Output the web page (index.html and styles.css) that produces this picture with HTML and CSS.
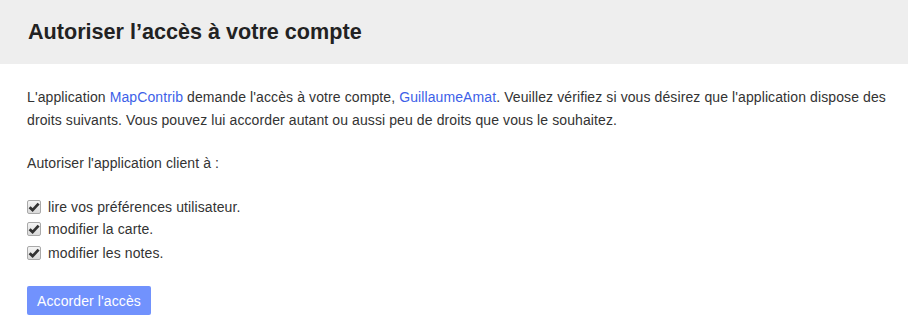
FILE: index.html
```html
<!DOCTYPE html>
<html lang="fr">
<head>
<meta charset="utf-8">
<link rel="stylesheet" href="styles.css">
</head>
<body>
<header class="header">
  <h1 class="title">Autoriser l’accès à votre compte</h1>
</header>
<main class="content">
  <p class="intro">L'application <a href="#" class="link">MapContrib</a> demande l'accès à votre compte, <a href="#" class="link">GuillaumeAmat</a>. Veuillez vérifiez si vous désirez que l'application dispose des droits suivants. Vous pouvez lui accorder autant ou aussi peu de droits que vous le souhaitez.</p>
  <p class="label">Autoriser l'application client à :</p>
  <ul class="perms">
    <li class="perm"><span class="check"><svg viewBox="0 0 12 12" width="12" height="12"><path d="M1.6 6.2 L4.6 9.1 L10.6 2.6" fill="none" stroke="#333" stroke-width="2.8" stroke-linejoin="miter"/></svg></span>lire vos préférences utilisateur.</li>
    <li class="perm"><span class="check"><svg viewBox="0 0 12 12" width="12" height="12"><path d="M1.6 6.2 L4.6 9.1 L10.6 2.6" fill="none" stroke="#333" stroke-width="2.8" stroke-linejoin="miter"/></svg></span>modifier la carte.</li>
    <li class="perm"><span class="check"><svg viewBox="0 0 12 12" width="12" height="12"><path d="M1.6 6.2 L4.6 9.1 L10.6 2.6" fill="none" stroke="#333" stroke-width="2.8" stroke-linejoin="miter"/></svg></span>modifier les notes.</li>
  </ul>
  <button class="btn" type="button">Accorder l'accès</button>
</main>
</body>
</html>
```
FILE: styles.css
```css
html, body {
  margin: 0;
  padding: 0;
  background: #fff;
  font-family: "Liberation Sans", Arial, sans-serif;
  color: #333;
}
.header {
  background: #eeeeee;
  height: 64px;
  padding: 0 28px;
  display: flex;
  align-items: center;
}
.title {
  margin: 0;
  font-size: 21.6px;
  font-weight: bold;
  color: #222;
}
.content {
  padding: 22px 16px 0 27px;
  font-size: 14px;
  line-height: 23px;
  letter-spacing: 0.1px;
}
.intro {
  margin: 0 0 20px 0;
}
.link {
  color: #3d5fe8;
  text-decoration: none;
}
.label {
  margin: 0 0 21px 0;
}
.perms {
  list-style: none;
  margin: 0 0 22px 0;
  padding: 0;
}
.perm {
  display: flex;
  align-items: center;
  height: 22px;
}
.perm:last-child {
  margin-top: 2px;
}
.check {
  width: 12px;
  height: 12px;
  border: 1px solid #a9a9a9;
  border-radius: 2px;
  background: linear-gradient(#f4f4f4, #dadada);
  margin-right: 7px;
  display: flex;
  align-items: center;
  justify-content: center;
  flex-shrink: 0;
}
.check svg { display: block; }
.btn {
  display: block;
  background: #7192fd;
  color: #fff;
  border: none;
  border-radius: 2px;
  font-family: "Liberation Sans", Arial, sans-serif;
  font-size: 14px;
  letter-spacing: 0.1px;
  height: 29px;
  padding: 0 10px;
}
```
